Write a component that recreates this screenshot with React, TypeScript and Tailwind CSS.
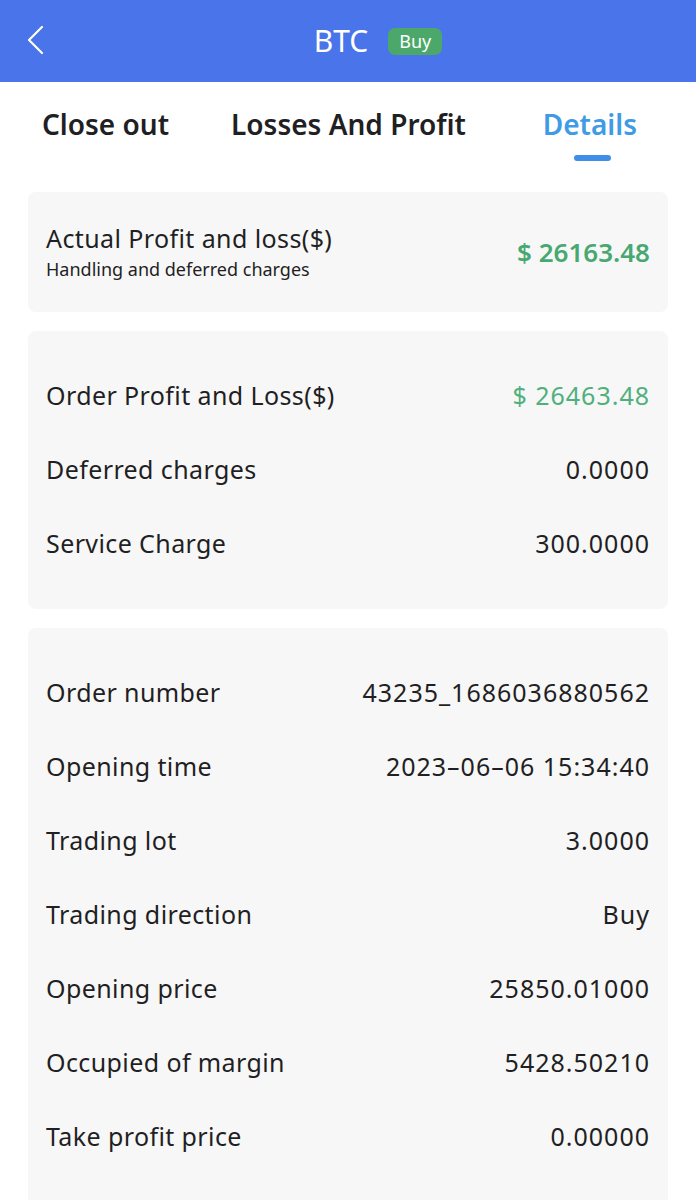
interface Row {
    label: string;
    value: string;
    green?: boolean;
}

const chargeRows: Row[] = [
    {label: 'Order Profit and Loss($)', value: '$ 26463.48', green: true},
    {label: 'Deferred charges', value: '0.0000'},
    {label: 'Service Charge', value: '300.0000'},
];

const orderRows: Row[] = [
    {label: 'Order number', value: '43235_1686036880562'},
    {label: 'Opening time', value: '2023–06–06 15:34:40'},
    {label: 'Trading lot', value: '3.0000'},
    {label: 'Trading direction', value: 'Buy'},
    {label: 'Opening price', value: '25850.01000'},
    {label: 'Occupied of margin', value: '5428.50210'},
    {label: 'Take profit price', value: '0.00000'},
];

function InfoRow({label, value, green}: Row) {
    return (
        <div className="flex h-[74px] items-center justify-between">
            <span className="tracking-[0.4px]">{label}</span>
            <span className={green ? 'tracking-[1px] text-[#4fb07d]' : 'tracking-[1px]'}>{value}</span>
        </div>
    );
}

export default function App() {
    return (
        <div className="h-[1200px] overflow-hidden bg-white font-['Noto_Sans',sans-serif] text-[#1f1f24]">
            <header className="relative flex h-[82px] items-center justify-center bg-[#4a74e9]">
                <svg width="20" height="30" viewBox="0 0 20 30" className="absolute left-[26px] top-[25px]">
                    <polyline points="16,2 3,15 16,28" fill="none" stroke="white" strokeWidth="2.2" strokeLinecap="round" strokeLinejoin="round"/>
                </svg>
                <div className="flex items-center gap-[20px] pl-[60px]">
                    <span className="text-[30px] leading-none text-white">BTC</span>
                    <span className="rounded-[7px] bg-[#4ca86a] px-[11px] py-[3px] text-[18px] leading-[21px] text-white">
                        Buy
                    </span>
                </div>
            </header>

            <nav className="flex h-[110px] items-start pt-[24px] text-[28px] font-semibold">
                <div className="ml-[42px] leading-[36px]">Close out</div>
                <div className="ml-[62px] leading-[36px]">Losses And Profit</div>
                <div className="ml-auto mr-[59px] flex flex-col items-center text-[#3f9be6]">
                    <span className="leading-[36px]">Details</span>
                    <span className="ml-[6px] mt-[13px] h-[6px] w-[37px] rounded-full bg-[#3f8fe8]"/>
                </div>
            </nav>

            <main className="flex flex-col gap-[19px] px-[28px] text-[25px]">
                <section className="flex h-[120px] items-center justify-between rounded-[8px] bg-[#f7f7f7] px-[18px]">
                    <div className="flex flex-col">
                        <span className="leading-[32px] tracking-[0.4px]">Actual Profit and loss($)</span>
                        <span className="mt-[2px] text-[18px] leading-[26px]">Handling and deferred charges</span>
                    </div>
                    <span className="text-[26px] font-semibold text-[#48a872]">$ 26163.48</span>
                </section>

                <section className="rounded-[8px] bg-[#f7f7f7] px-[18px] py-[28px]">
                    {chargeRows.map((r) => <InfoRow key={r.label} {...r}/>)}
                </section>

                <section className="rounded-[8px] bg-[#f7f7f7] px-[18px] pb-[80px] pt-[28px]">
                    {orderRows.map((r) => <InfoRow key={r.label} {...r}/>)}
                </section>
            </main>
        </div>
    );
}
